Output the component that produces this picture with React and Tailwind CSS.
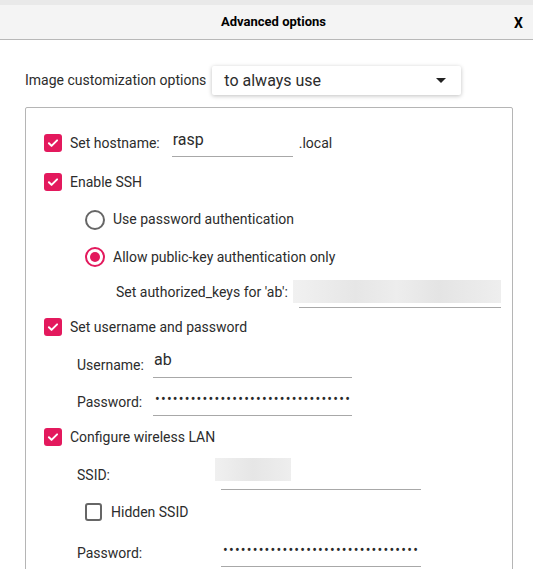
import React from 'react';

const Check = ({ checked = true }) =>
  checked ? (
    <span className="flex h-[18px] w-[18px] shrink-0 items-center justify-center rounded-[3px] bg-[#e3195d]">
      <svg viewBox="0 0 24 24" className="h-[14px] w-[14px]" fill="none" stroke="white" strokeWidth="3.4" strokeLinecap="round" strokeLinejoin="round">
        <path d="M5 12.5l4.5 4.5L19 7.5" />
      </svg>
    </span>
  ) : (
    <span className="h-[18px] w-[17px] shrink-0 rounded-[3px] border-2 border-[#666]" />
  );

const Radio = ({ checked }) => (
  <span
    className={`flex h-[20px] w-[20px] shrink-0 items-center justify-center rounded-full border-2 ${
      checked ? 'border-[#e3195d]' : 'border-[#666]'
    }`}
  >
    {checked && <span className="h-[10px] w-[10px] rounded-full bg-[#e3195d]" />}
  </span>
);

const Field = ({ className, children }) => (
  <div className={`flex h-[28px] items-center border-b border-[#a8a8a8] pb-[5px] ${className}`}>
    {children}
  </div>
);

const Dots = ({ n }) => (
  <span className="text-[14px] leading-none tracking-[1.22px] text-[#2a2a2a]">{'•'.repeat(n)}</span>
);

export default function App() {
  return (
    <div className="h-[569px] w-[533px] overflow-hidden bg-white font-['Roboto','Liberation_Sans',sans-serif] text-[14px] text-[#2c2c2c]">
      <div className="h-[5px] bg-[#e9e9e9]" />
      <div className="relative flex h-[35px] items-center justify-center border-b border-[#b8b8b8] bg-[#f4f4f4]">
        <span className="pl-[14px] text-[13px] font-bold text-black">Advanced options</span>
        <span className="absolute right-[10px] top-[8px] text-[14px] font-bold text-black">X</span>
      </div>

      <div className="px-[25px] pt-[26px]">
        <div className="flex items-center gap-[6px]">
          <span>Image customization options</span>
          <div className="flex h-[29px] w-[249px] items-center justify-between rounded-[2px] bg-white pl-[12px] pr-[15px] text-[16px] shadow-[0_1px_4px_rgba(0,0,0,0.25)]">
            <span>to always use</span>
            <svg viewBox="0 0 10 5" className="h-[5px] w-[10px]"><path d="M0 0h10L5 5z" fill="#222" /></svg>
          </div>
        </div>

        <div className="mt-[12px] h-[480px] w-[488px] rounded-[2px] border border-[#b5b5b5] pl-[18px] pt-[15px]">
          <div className="flex h-[40px] items-center gap-[8px]">
            <Check />
            <span>Set hostname:</span>
            <Field className="ml-[4px] w-[121px] text-[16px] pl-[1px]">rasp</Field>
            <span className="-ml-[2px]">.local</span>
          </div>
          <div className="flex h-[38px] items-center gap-[8px]">
            <Check />
            <span>Enable SSH</span>
          </div>
          <div className="flex h-[37px] items-center gap-[8px] pl-[41px]">
            <Radio />
            <span>Use password authentication</span>
          </div>
          <div className="flex h-[38px] items-center gap-[8px] pl-[41px]">
            <Radio checked />
            <span>Allow public-key authentication only</span>
          </div>
          <div className="flex h-[33px] items-center pl-[72px]">
            <span>Set authorized_keys for 'ab':</span>
            <div className="ml-[5px] flex w-[208px] flex-col pt-[3px]">
              <div className="h-[23px] bg-[linear-gradient(90deg,#f1f1f1,#e6e6e6_30%,#ededed_50%,#e4e4e4_70%,#eeeeee)]" />
              <div className="ml-[6px] mt-[4px] h-px bg-[#a8a8a8]" />
            </div>
          </div>
          <div className="flex h-[36px] items-center gap-[8px]">
            <Check />
            <span>Set username and password</span>
          </div>
          <div className="flex h-[38px] items-center pl-[33px]">
            <span className="w-[76px] pt-[3px]">Username:</span>
            <Field className="w-[199px] pb-[7px] pl-[1px] text-[16px]">ab</Field>
          </div>
          <div className="flex h-[38px] items-center pl-[33px]">
            <span className="w-[76px]">Password:</span>
            <Field className="w-[199px] pl-[2px]"><Dots n={33} /></Field>
          </div>
          <div className="flex h-[32px] items-center gap-[8px]">
            <Check />
            <span>Configure wireless LAN</span>
          </div>
          <div className="flex h-[40px] items-center pl-[33px]">
            <span className="w-[144px] pt-[4px]">SSID:</span>
            <div className="flex w-[200px] flex-col pt-[2px]">
              <div className="-ml-[6px] h-[23px] w-[76px] bg-[linear-gradient(90deg,#f0f0f0,#e6e6e6_50%,#eeeeee)]" />
              <div className="mt-[8px] h-px bg-[#a8a8a8]" />
            </div>
          </div>
          <div className="flex h-[38px] items-center gap-[9px] pl-[41px]">
            <Check checked={false} />
            <span>Hidden SSID</span>
          </div>
          <div className="flex h-[44px] items-center pl-[33px]">
            <span className="w-[144px]">Password:</span>
            <Field className="w-[200px] pl-[2px]"><Dots n={33} /></Field>
          </div>
        </div>
      </div>
    </div>
  );
}
